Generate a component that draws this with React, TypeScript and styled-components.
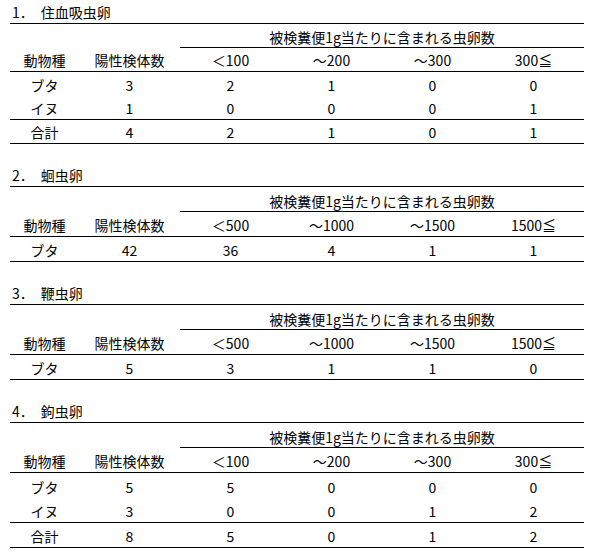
import styled, { createGlobalStyle } from "styled-components";

const GlobalStyle = createGlobalStyle`
	html, body {
		margin: 0;
		padding: 0;
		background: #fff;
	}
	body {
		font-family: "Noto Sans CJK JP", "Noto Sans", sans-serif;
		font-size: 14px;
		color: #000;
	}
`;

const Page = styled.div`
	display: flex;
	flex-direction: column;
	gap: 18px;
	width: 574px;
	padding: 0 0 0 10px;
`;

const Table = styled.section`
	display: flex;
	flex-direction: column;
`;

const Row = styled.div<{ $h: number; $line?: boolean }>`
	display: grid;
	grid-template-columns: 69px 101px repeat(4, 101px);
	box-sizing: border-box;
	height: ${(p) => p.$h}px;
	border-bottom: ${(p) => (p.$line ? "1px solid #000" : "none")};
`;

const Title = styled.div`
	grid-column: 1 / -1;
	display: flex;
	align-items: flex-end;
	padding: 0 0 3px 2px;
	line-height: 16px;
	white-space: pre;
`;

const Cell = styled.div`
	display: flex;
	align-items: flex-end;
	justify-content: center;
	padding-bottom: 3px;
	line-height: 16px;
	white-space: nowrap;
`;

const Span = styled(Cell)`
	grid-column: 3 / 7;
	box-sizing: border-box;
	border-bottom: 1px solid #000;
	padding-bottom: 2px;
`;

type Data = {
	title: string;
	ranges: string[];
	rows: { name: string; vals: (string | number)[]; line?: boolean }[];
	h: number;
};

const tables: Data[] = [
	{
		title: "1．　住血吸虫卵",
		ranges: ["＜100", "～200", "～300", "300≦"],
		h: 24,
		rows: [
			{ name: "ブタ", vals: [3, 2, 1, 0, 0] },
			{ name: "イヌ", vals: [1, 0, 0, 0, 1], line: true },
			{ name: "合計", vals: [4, 2, 1, 0, 1], line: true },
		],
	},
	{
		title: "2．　蛔虫卵",
		ranges: ["＜500", "～1000", "～1500", "1500≦"],
		h: 25,
		rows: [{ name: "ブタ", vals: [42, 36, 4, 1, 1], line: true }],
	},
	{
		title: "3．　鞭虫卵",
		ranges: ["＜500", "～1000", "～1500", "1500≦"],
		h: 25,
		rows: [{ name: "ブタ", vals: [5, 3, 1, 1, 0], line: true }],
	},
	{
		title: "4．　鉤虫卵",
		ranges: ["＜100", "～200", "～300", "300≦"],
		h: 25,
		rows: [
			{ name: "ブタ", vals: [5, 5, 0, 0, 0] },
			{ name: "イヌ", vals: [3, 0, 0, 1, 2], line: true },
			{ name: "合計", vals: [8, 5, 0, 1, 2], line: true },
		],
	},
];

function EggTable({ data }: { data: Data }) {
	const { h } = data;
	return (
		<Table>
			<Row $h={h} $line>
				<Title>{data.title}</Title>
			</Row>
			<Row $h={h}>
				<Span>被検糞便1g当たりに含まれる虫卵数</Span>
			</Row>
			<Row $h={h} $line>
				<Cell>動物種</Cell>
				<Cell>陽性検体数</Cell>
				{data.ranges.map((r) => (
					<Cell key={r}>{r}</Cell>
				))}
			</Row>
			{data.rows.map((row) => (
				<Row key={row.name} $h={h} $line={row.line}>
					<Cell>{row.name}</Cell>
					{row.vals.map((v, i) => (
						<Cell key={i}>{v}</Cell>
					))}
				</Row>
			))}
		</Table>
	);
}

export default function App() {
	return (
		<>
			<GlobalStyle />
			<Page>
				{tables.map((t) => (
					<EggTable key={t.title} data={t} />
				))}
			</Page>
		</>
	);
}
